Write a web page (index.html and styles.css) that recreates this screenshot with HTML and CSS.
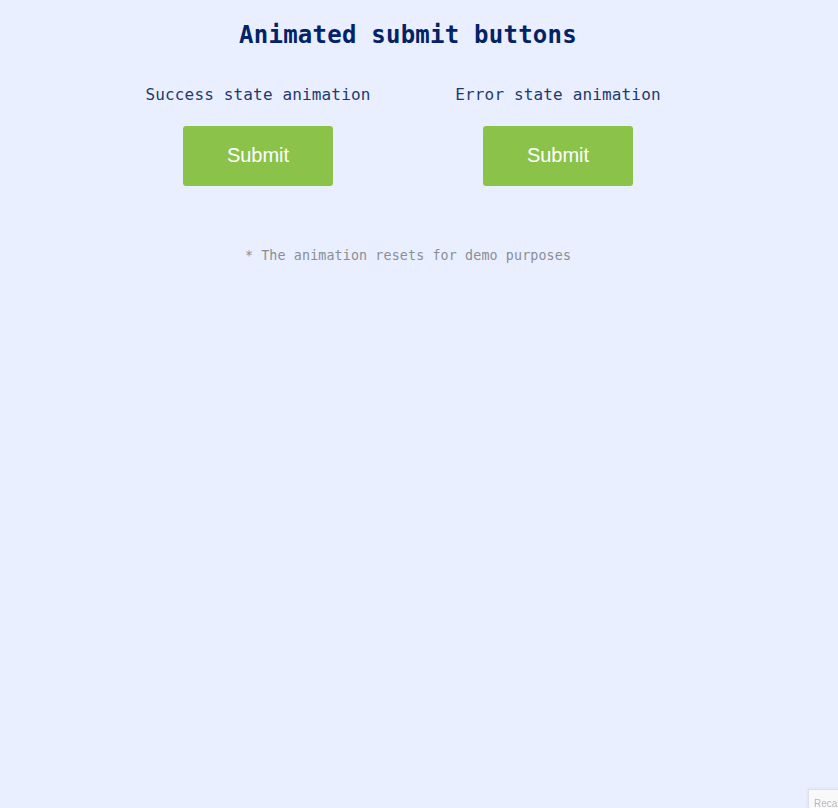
FILE: index.html
```html
<!DOCTYPE html>
<html>
<head>
<meta charset="utf-8">
<link rel="stylesheet" href="styles.css">
</head>
<body>
<main class="page">
  <h1 class="title">Animated submit buttons</h1>
  <div class="demos">
    <section class="demo">
      <p class="label">Success state animation</p>
      <button class="btn">Submit</button>
    </section>
    <section class="demo">
      <p class="label">Error state animation</p>
      <button class="btn">Submit</button>
    </section>
  </div>
  <p class="note">* The animation resets for demo purposes</p>
</main>
<div class="badge">Reca</div>
</body>
</html>
```
FILE: styles.css
```css
html, body {
  margin: 0;
  padding: 0;
  background: #e9efff;
  height: 100%;
}
body {
  font-family: "DejaVu Sans Mono", "Liberation Mono", monospace;
  overflow: hidden;
}
.page {
  width: 816px;
  display: flex;
  flex-direction: column;
  align-items: center;
}
.title {
  margin: 18px 0 0;
  font-size: 24px;
  line-height: 34px;
  font-weight: bold;
  letter-spacing: 0.24px;
  color: #022366;
}
.demos {
  display: flex;
  margin-top: 32px;
}
.demo {
  width: 300px;
  display: flex;
  flex-direction: column;
  align-items: center;
}
.label {
  margin: 0;
  font-size: 16px;
  line-height: 22px;
  letter-spacing: 0.15px;
  color: #1e3a70;
}
.btn {
  margin-top: 20px;
  width: 150px;
  height: 60px;
  border: none;
  border-radius: 3px;
  background: #8bc34a;
  color: #fff;
  font-family: "Liberation Sans", Arial, sans-serif;
  font-size: 20px;
  padding: 0 0 2px;
}
.note {
  margin: 60px 0 0;
  font-size: 13.33px;
  line-height: 20px;
  letter-spacing: 0.13px;
  color: #8a8e96;
}
.badge {
  position: fixed;
  left: 808px;
  top: 789px;
  width: 60px;
  height: 40px;
  background: #f9f9f9;
  border: 1px solid #dde0e8;
  box-shadow: 0 0 3px rgba(0,0,0,0.08);
  font-family: "Liberation Sans", Arial, sans-serif;
  font-size: 10px;
  color: #b4b7bf;
  padding: 8px 0 0 5px;
  box-sizing: border-box;
}
```
